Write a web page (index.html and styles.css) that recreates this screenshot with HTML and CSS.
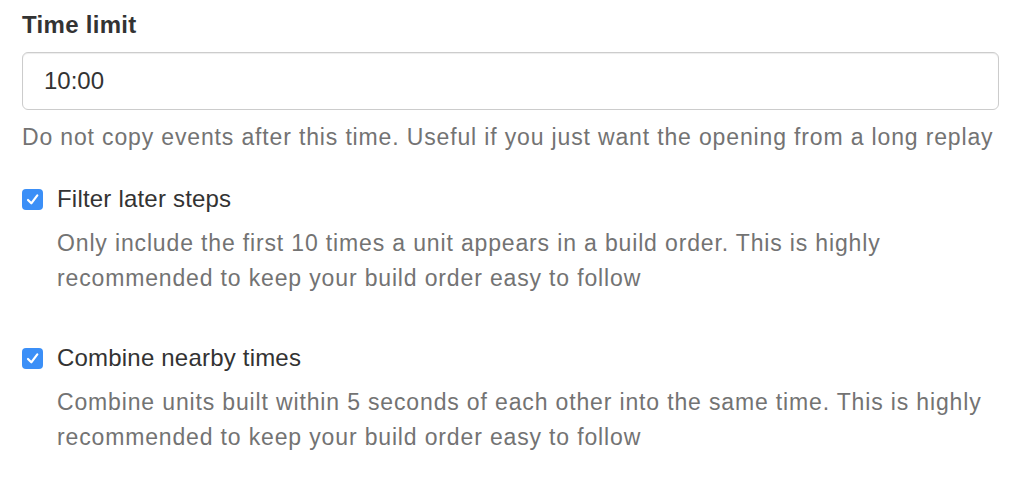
FILE: index.html
```html
<!DOCTYPE html>
<html lang="en">
<head>
    <meta charset="UTF-8">
    <title>Build order options</title>
    <link rel="stylesheet" href="styles.css">
</head>
<body>
    <form class="options">
        <div class="form-group">
            <label class="control-label" for="timeLimit">Time limit</label>
            <input type="text" id="timeLimit" class="form-control" value="10:00">
            <p class="help-block">Do not copy events after this time. Useful if you just want the opening from a long replay</p>
        </div>

        <div class="checkbox">
            <label>
                <span class="check">
                    <svg viewBox="0 0 21 21" width="21" height="21"><path d="M6 11 L9.3 14.3 L15.3 6.3" /></svg>
                </span>
                Filter later steps
            </label>
            <p class="help-block">Only include the first 10 times a unit appears in a build order. This is highly recommended to keep your build order easy to follow</p>
        </div>

        <div class="checkbox">
            <label>
                <span class="check">
                    <svg viewBox="0 0 21 21" width="21" height="21"><path d="M6 11 L9.3 14.3 L15.3 6.3" /></svg>
                </span>
                Combine nearby times
            </label>
            <p class="help-block">Combine units built within 5 seconds of each other into the same time. This is highly recommended to keep your build order easy to follow</p>
        </div>
    </form>
</body>
</html>
```

FILE: styles.css
```css
body {
    margin: 0;
    padding: 8px 25px 0 22px;
    font-family: "Liberation Sans", Arial, sans-serif;
    color: #333;
    background: #fff;
}
.form-group {
    margin-bottom: 27px;
}
.control-label {
    display: block;
    font-size: 24px;
    line-height: 34px;
    font-weight: bold;
    letter-spacing: 0.3px;
    margin-bottom: 10px;
}
.form-control {
    display: block;
    width: 100%;
    height: 58px;
    box-sizing: border-box;
    padding: 0 21px;
    font-family: inherit;
    font-size: 24px;
    color: #333;
    border: 1px solid #ccc;
    border-radius: 6px;
    box-shadow: inset 0 1px 1px rgba(0,0,0,0.075);
}
.help-block {
    margin: 10px 0 0;
    font-size: 23px;
    line-height: 35px;
    letter-spacing: 0.85px;
    color: #737373;
}
.checkbox {
    margin-bottom: 45px;
}
.checkbox label {
    display: flex;
    align-items: center;
    gap: 14px;
    font-size: 24px;
    line-height: 34px;
    letter-spacing: 0.2px;
}
.checkbox .help-block {
    margin-left: 35px;
}
.check {
    width: 21px;
    height: 21px;
    border-radius: 4px;
    background: #3b8ff7;
    display: flex;
}
.check path {
    fill: none;
    stroke: #fff;
    stroke-width: 2.2;
    stroke-linecap: round;
    stroke-linejoin: round;
}
```
